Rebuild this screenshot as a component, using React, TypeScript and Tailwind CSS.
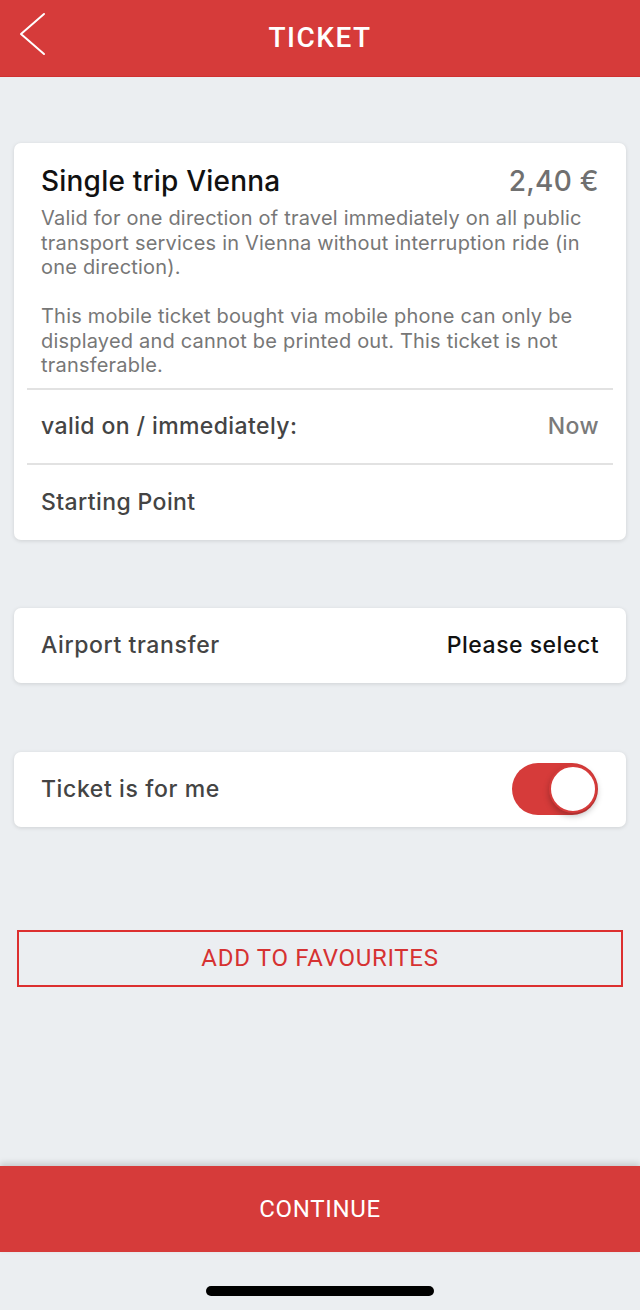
import React from "react";

export default function App() {
  const roboto = { fontFamily: "Roboto, 'Liberation Sans', sans-serif" };
  const body = { fontFamily: "Inter, Roboto, 'Liberation Sans', sans-serif" };
  return (
    <div className="w-[640px] min-h-[1310px] bg-[#ebeef1] flex flex-col" style={body}>
      {/* Header */}
      <div className="h-[77px] bg-[#d63b3a] border-b border-[#cf3131] flex items-center justify-center relative shrink-0">
        <svg className="absolute left-[16px] top-[12px]" width="32" height="46" viewBox="0 0 32 46">
          <polyline points="28,2 5,22 28,42" fill="none" stroke="#ffffff" strokeWidth="2" strokeLinecap="round" strokeLinejoin="round" />
        </svg>
        <span className="text-white text-[28px] font-medium leading-none tracking-[1.5px]" style={roboto}>TICKET</span>
      </div>

      <div className="flex-1 flex flex-col">
        {/* Card 1 */}
        <div className="mt-[66px] mx-[14px] bg-white rounded-[7px] shadow-[0_1px_4px_rgba(0,0,0,0.12)]">
          <div className="px-[27px] pt-[20px]">
            <div className="flex justify-between items-center h-[36px]">
              <span className="text-[28px] font-medium tracking-[0.2px] text-[#111111]">Single trip Vienna</span>
              <span className="text-[28px] font-medium tracking-[0.3px] text-[#707070]">2,40 €</span>
            </div>
            <div className="mt-[7px] text-[20px] leading-[24.5px] tracking-[0.2px] text-[#777777]">
              <p>Valid for one direction of travel immediately on all public transport services in Vienna without interruption ride (in one direction).</p>
              <p className="mt-[24.5px]">This mobile ticket bought via mobile phone can only be displayed and cannot be printed out. This ticket is not transferable.</p>
            </div>
          </div>
          <div className="mt-[10px] mx-[13px] h-[2px] bg-[#e2e2e2]" />
          <div className="h-[73px] px-[27px] flex items-center justify-between">
            <span className="text-[23px] font-medium tracking-[0.4px] text-[#444444]">valid on / immediately:</span>
            <span className="text-[23px] font-medium tracking-[0.4px] text-[#7a7a7a]">Now</span>
          </div>
          <div className="mx-[13px] h-[2px] bg-[#e2e2e2]" />
          <div className="h-[75px] px-[27px] flex items-center">
            <span className="text-[23px] font-medium tracking-[0.4px] text-[#444444]">Starting Point</span>
          </div>
        </div>

        {/* Card 2 */}
        <div className="mt-[68px] mx-[14px] h-[75px] bg-white rounded-[7px] shadow-[0_1px_4px_rgba(0,0,0,0.12)] px-[27px] flex items-center justify-between">
          <span className="text-[23px] font-medium tracking-[0.6px] text-[#444444]">Airport transfer</span>
          <span className="text-[23px] font-medium tracking-[0.5px] text-[#111111]">Please select</span>
        </div>

        {/* Card 3 */}
        <div className="mt-[69px] mx-[14px] h-[75px] bg-white rounded-[7px] shadow-[0_1px_4px_rgba(0,0,0,0.12)] pl-[27px] pr-[28px] flex items-center justify-between">
          <span className="text-[23px] font-medium tracking-[0.6px] text-[#444444]">Ticket is for me</span>
          <div className="w-[86px] h-[52px] rounded-full bg-[#d63b3a] relative">
            <div className="absolute right-[1px] top-[2px] w-[48px] h-[48px] rounded-full bg-white border-2 border-[#d63b3a] shadow-[0_3px_6px_rgba(0,0,0,0.25)]" />
          </div>
        </div>

        {/* Add to favourites */}
        <div className="mt-[103px] mx-[17px] h-[57px] border-2 border-[#dc2f2f] flex items-center justify-center">
          <span className="text-[24px] text-[#d63232] tracking-[0.7px]" style={roboto}>ADD TO FAVOURITES</span>
        </div>
      </div>

      {/* Continue */}
      <div className="h-[86px] bg-[#d63b3a] shadow-[0_-3px_6px_rgba(0,0,0,0.15)] flex items-center justify-center shrink-0">
        <span className="text-[24px] text-white tracking-[0.7px]" style={roboto}>CONTINUE</span>
      </div>
      <div className="h-[58px] flex items-start justify-center shrink-0">
        <div className="mt-[34px] w-[228px] h-[10px] rounded-full bg-black" />
      </div>
    </div>
  );
}
